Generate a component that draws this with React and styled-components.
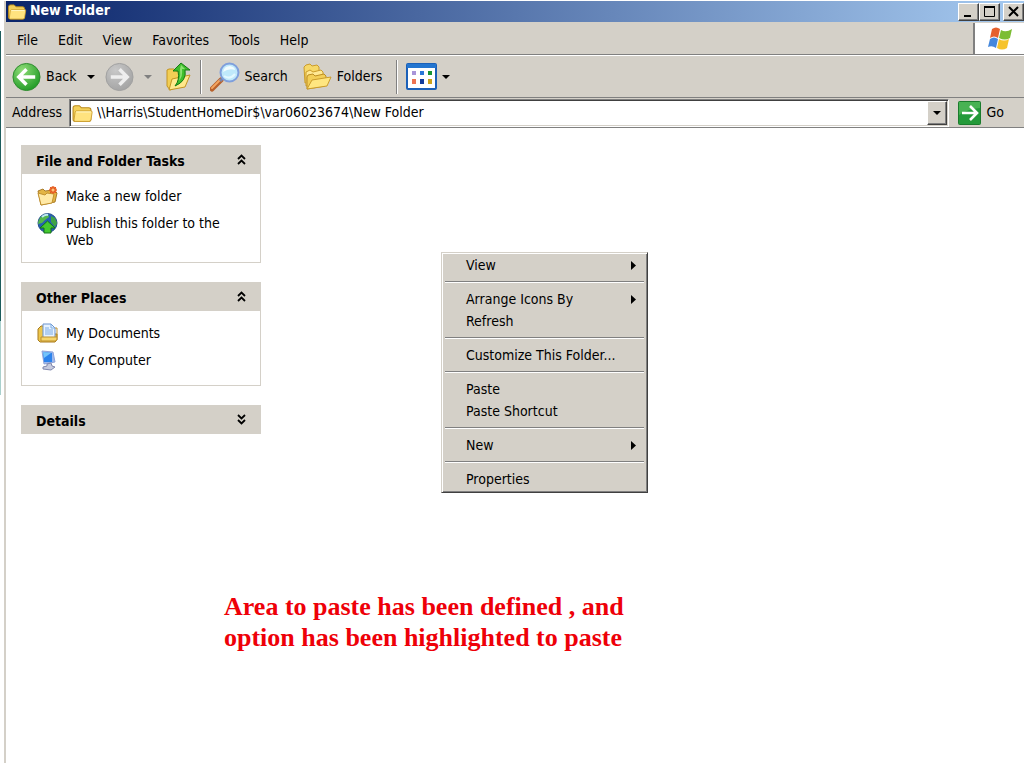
import React, { useState } from "react";
import styled, { createGlobalStyle } from "styled-components";

const GlobalStyle = createGlobalStyle`
  * {
    box-sizing: border-box;
  }

  body {
    margin: 0;
    background-color: #ffffff;
    color: #000000;
    font-family: "DejaVu Sans Condensed", "DejaVu Sans", sans-serif;
    font-size: 14px;
    line-height: 17px;
  }

  button,
  input {
    margin: 0;
    padding: 0;
    border: none;
    background: none;
    color: inherit;
    font: inherit;
  }

  svg {
    display: block;
    flex-shrink: 0;
  }
`;

const Screen = styled.div`
  display: flex;
  min-height: 100vh;
  padding: 1px 0 5px;
`;

// strip of the window behind
const Behind = styled.div`
  display: flex;
  flex-direction: column;
  width: 4px;
  padding-top: 30px;
`;

const BehindEdge = styled.div`
  width: 1px;
  height: ${(props) => (props.$faded ? "74px" : "290px")};
  background-color: ${(props) => (props.$faded ? "#a9d0cc" : "#1d5d5c")};
`;

const Window = styled.div`
  position: relative;
  display: flex;
  flex-direction: column;
  flex: 1;
  min-width: 0;
  border-left: 2px solid #d4d0c8;
`;

const TitleBar = styled.header`
  display: flex;
  align-items: center;
  height: 21px;
  padding-left: 1px;
  background: linear-gradient(to right, #0a246a, #a6caf0);
`;

const Title = styled.h1`
  flex: 1;
  margin: 0 0 0 3px;
  padding-bottom: 2px;
  color: #ffffff;
  font-size: 14px;
  font-weight: bold;
  line-height: 17px;
`;

const WindowButton = styled.button`
  display: flex;
  justify-content: center;
  align-items: center;
  width: 21px;
  height: 18px;
  margin-left: ${(props) => (props.$apart ? "3px" : "0")};
  background-color: #d4d0c8;
  border: 1px solid;
  border-color: #ffffff #404040 #404040 #ffffff;
  box-shadow: inset -1px -1px 0 #808080;
`;

const Bars = styled.div`
  background-color: #d4d0c8;
  border-top: 1px solid #d4d0c8;
  border-bottom: 1px solid #808080;
`;

const MenuBar = styled.nav`
  display: flex;
  align-items: stretch;
  height: 32px;
  padding-left: 1px;
  border-bottom: 1px solid #808080;
`;

const MenuButton = styled.button`
  padding: 3px 10px 0;
`;

const Brand = styled.div`
  display: flex;
  justify-content: center;
  align-items: center;
  width: 51px;
  margin-left: auto;
  background-color: #ffffff;
  border-left: 2px solid #808080;
`;

const Toolbar = styled.div`
  display: flex;
  align-items: center;
  height: 43px;
  padding: 0 6px;
  border-top: 1px solid #ffffff;
  border-bottom: 1px solid #808080;
`;

const ToolButton = styled.button`
  display: flex;
  align-items: center;
  gap: 5px;
  margin-right: ${(props) => props.$after || "12px"};
`;

const Separator = styled.div`
  width: 2px;
  height: 34px;
  margin-right: 8px;
  border-left: 1px solid #808080;
  border-right: 1px solid #ffffff;
`;

const AddressBar = styled.form`
  display: flex;
  align-items: center;
  height: 29px;
  padding: 0 20px 0 6px;
`;

const AddressField = styled.div`
  display: flex;
  align-items: center;
  flex: 1;
  height: 28px;
  margin: 0 9px 0 7px;
  padding-left: 2px;
  background-color: #ffffff;
  border: 1px solid;
  border-color: #808080 #ffffff #ffffff #808080;
  box-shadow: inset 1px 1px 0 #404040, inset -1px -1px 0 #d4d0c8;
`;

const AddressInput = styled.input`
  flex: 1;
  min-width: 0;
  padding-left: 4px;
  outline: none;
`;

const DropButton = styled(WindowButton)`
  width: 20px;
  height: 24px;
  margin-right: 1px;
`;

const GoButton = styled.button`
  display: flex;
  align-items: center;
  gap: 6px;
`;

const Content = styled.main`
  flex: 1;
  padding: 17px 15px;
  background-color: #ffffff;
`;

const Sidebar = styled.aside`
  display: flex;
  flex-direction: column;
  gap: 19px;
  width: 240px;
`;

const PanelHeader = styled.button`
  display: flex;
  justify-content: space-between;
  align-items: center;
  width: 100%;
  height: 29px;
  padding: 3px 14px 0 15px;
  background-color: #d4d0c8;
  font-weight: bold;
`;

const PanelBody = styled.div`
  display: flex;
  flex-direction: column;
  gap: 5px;
  padding: 12px 15px 13px;
  border: 1px solid #d4d0c8;
  border-top: none;
`;

const TaskLink = styled.a`
  display: flex;
  gap: 8px;
  min-height: 22px;
  color: #000000;
  text-decoration: none;

  span {
    padding-top: 2px;
    max-width: 160px;
  }
`;

const ContextMenu = styled.div`
  position: absolute;
  top: 251px;
  left: 435px;
  width: 207px;
  padding: 1px 3px 2px;
  background-color: #d4d0c8;
  border: 1px solid;
  border-color: #d4d0c8 #404040 #404040 #d4d0c8;
  box-shadow: inset 1px 1px 0 #ffffff, inset -1px -1px 0 #808080;
`;

const MenuItem = styled.button`
  display: flex;
  justify-content: space-between;
  align-items: center;
  width: 100%;
  height: 22px;
  padding: 1px 8px 0 21px;
`;

const MenuLine = styled.hr`
  height: 2px;
  margin: 5px 0;
  border: none;
  border-top: 1px solid #808080;
  border-bottom: 1px solid #ffffff;
`;

const Note = styled.p`
  position: absolute;
  top: 590px;
  left: 218px;
  width: 410px;
  margin: 0;
  color: #ee0008;
  font-family: "Liberation Serif", serif;
  font-size: 26px;
  font-weight: bold;
  line-height: 31px;
`;

const FolderIcon = ({ width, height }) => (
  <svg width={width} height={height} viewBox="0 0 20 18">
    <path
      d="M1 4Q1 2 3 2H7L9 4H16Q18 4 18 6V15Q18 17 16 17H3Q1 17 1 15Z"
      fill="#f3cf58"
      stroke="#b98a1d"
    />
    <path
      d="M4 7H18Q19.500 7 19.200 8.500L18 15.500Q17.700 17 16 17H3Q1.500 17 2 15L3 8Z"
      fill="#ffe37f"
      stroke="#c99b2c"
      strokeWidth="0.8"
    />
    <path d="M4 8H18" stroke="#fff6c8" />
  </svg>
);

const Caret = ({ color = "#000000" }) => (
  <svg width="8" height="4" viewBox="0 0 8 4">
    <path d="M0 0H8L4 4Z" fill={color} />
  </svg>
);

const SubArrow = () => (
  <svg width="5" height="9" viewBox="0 0 5 9">
    <path d="M0 0L5 4.500L0 9Z" fill="#000000" />
  </svg>
);

const RoundArrow = ({ id, light, dark, edge, back }) => (
  <svg width="29" height="30" viewBox="0 0 30 30">
    <defs>
      <radialGradient id={id} cx="0.35" cy="0.25" r="0.8">
        <stop offset="0" stopColor={light} />
        <stop offset="1" stopColor={dark} />
      </radialGradient>
    </defs>
    <circle cx="15" cy="15" r="14" fill={`url(#${id})`} stroke={edge} />
    <path
      d={back ? "M24 15H8M15 7L7 15L15 23" : "M6 15H22M15 7L23 15L15 23"}
      fill="none"
      stroke={back ? "#ffffff" : "#eeeeee"}
      strokeWidth="3.600"
    />
  </svg>
);

const UpFolderIcon = () => (
  <svg width="26" height="30" viewBox="0 0 26 30">
    <path d="M1 8L3 7L8 7L10 9L14 9V24L4 28L1 24Z" fill="#f2ce55" stroke="#c39422" />
    <path d="M3 28L6 17L24 13L19 25Z" fill="#ffe88c" stroke="#c39422" />
    <path
      d="M9 24Q14 18 12 9H7L15 1L24 8H19Q21 19 9 24Z"
      fill="#3fbd2c"
      stroke="#167a14"
    />
    <path d="M15 3L19 7H16Q17 14 13 19Q15 13 14 7Z" fill="#8be370" />
  </svg>
);

const SearchIcon = () => (
  <svg width="30" height="30" viewBox="0 0 30 30">
    <path d="M2 27L11 18" stroke="#b8612c" strokeWidth="5" strokeLinecap="round" />
    <path d="M2 26L10 18" stroke="#f3a560" strokeWidth="2" strokeLinecap="round" />
    <path d="M10 19L13 16" stroke="#7d86a8" strokeWidth="3" />
    <circle cx="19.500" cy="10.500" r="9" fill="#bfe9fb" stroke="#7f9fdc" strokeWidth="2" />
    <path d="M13 10Q14 4 20 4Q25 5 25 8Q19 6 13 10Z" fill="#f2fcff" />
    <path d="M14 14Q20 18 25 12" fill="none" stroke="#e3f8ff" strokeWidth="2" />
  </svg>
);

const FoldersIcon = () => (
  <svg width="30" height="28" viewBox="0 0 30 28">
    <path d="M2 4L4 2L8 1L10 3L15 2L17 4V16L3 20Z" fill="#f6d869" stroke="#cb9c2b" />
    <path d="M4 9L8 7L11 9L19 7L21 9L21 19L4 23Z" fill="#ffe993" stroke="#cb9c2b" />
    <path d="M5 14L6 12L11 11L13 13L22 11L24 13L23 23L5 26Z" fill="#f3cf58" stroke="#bd8e22" />
    <path d="M5 26L10 17L29 14L25 23Z" fill="#ffe680" stroke="#cb9c2b" />
  </svg>
);

const ViewsIcon = () => (
  <svg width="31" height="27" viewBox="0 0 31 27">
    <rect x="1" y="1" width="29" height="25" rx="1" fill="#ffffff" stroke="#1b60b8" strokeWidth="2" />
    <rect x="1" y="1" width="29" height="4" fill="#2375d0" />
    <rect x="6" y="8" width="4" height="4" fill="#a894d8" />
    <rect x="14" y="8" width="4" height="4" fill="#2a76d8" />
    <rect x="22" y="8" width="4" height="4" fill="#179432" />
    <rect x="6" y="16" width="4" height="5" fill="#ee7350" />
    <rect x="14" y="16" width="4" height="5" fill="#123c9c" />
    <rect x="22" y="16" width="4" height="5" fill="#cda21a" />
  </svg>
);

const FlagIcon = () => (
  <svg width="26" height="26" viewBox="0 0 26 26">
    <path d="M5 3Q9 0 13 3L11 12Q7 9 3 12Z" fill="#e4602c" />
    <path d="M14 4Q19 7 25 3L23 12Q18 15 12 12Z" fill="#7cbd33" />
    <path d="M3 13Q7 10 11 13L9 22Q5 19 1 21Z" fill="#4487dc" />
    <path d="M12 13Q17 16 22 13L20 22Q15 25 10 22Z" fill="#f6c32c" />
  </svg>
);

const GoIcon = () => (
  <svg width="23" height="24" viewBox="0 0 23 24">
    <rect x="0.500" y="0.500" width="22" height="23" rx="1" fill="#249a3a" stroke="#1b7c2d" />
    <path d="M1 1H22V7Q10 8 1 14Z" fill="#48b253" />
    <path d="M4 12H18M12 5L19 12L12 19" fill="none" stroke="#ffffff" strokeWidth="2.600" />
  </svg>
);

const NewFolderIcon = () => (
  <svg width="21" height="20" viewBox="0 0 21 20">
    <path d="M1 5L6 3L8 5L17 4L20 7L18 16L4 19Z" fill="#e3b545" stroke="#a87a28" />
    <path d="M4 19L1 7L8 9L10 7L17 8L15 17Z" fill="#ffe9a6" stroke="#c2912e" />
    <circle cx="16" cy="4" r="3.500" fill="#ee6a2c" />
    <path d="M16 0V8M12 4H20M13 1L19 7M19 1L13 7" stroke="#dd5a22" />
    <circle cx="16" cy="4" r="1.500" fill="#ffc37b" />
  </svg>
);

const GlobeIcon = () => (
  <svg width="21" height="21" viewBox="0 0 21 21">
    <circle cx="10.500" cy="10" r="9.500" fill="#2560b4" stroke="#28518c" />
    <path d="M3 5Q6 1 11 1L12 4L8 7L5 10L1 11Q1 8 3 5Z" fill="#54b84c" />
    <path d="M14 3L18 5L20 10L18 14L14 9Z" fill="#3fa445" />
    <path d="M5 4Q8 1 11 2" stroke="#bde7f5" strokeWidth="2" fill="none" />
    <path d="M10.500 8L18 15H14V20H7V15H3Z" fill="#44c92f" stroke="#15701b" />
  </svg>
);

const DocumentsIcon = () => (
  <svg width="21" height="20" viewBox="0 0 21 20">
    <path d="M1 6L4 3H7V11H20V17L18 19H3L1 17Z" fill="#edc64c" stroke="#a77b20" />
    <path d="M6 1H14L18 5V15H6Z" fill="#e6f2ff" stroke="#6a93cd" />
    <path d="M14 1V5H18M8 5H12M8 7H16M8 9H16M8 11H16" fill="none" stroke="#7dace4" />
    <path d="M4 14H20V16Q20 18 18 18H4Z" fill="#f6d66c" stroke="#bd9130" />
    <path d="M18 5H20V14" fill="none" stroke="#bd9130" />
  </svg>
);

const ComputerIcon = () => (
  <svg width="21" height="21" viewBox="0 0 21 21">
    <path d="M5 1L16 2L18 12L7 14Z" fill="#9db9ec" stroke="#8fa3da" />
    <path d="M6 2L15 3L15 12L7 12Z" fill="#2c83ec" />
    <path d="M6 2L14 3L7 8Z" fill="#74c4fa" />
    <path d="M10 14L14 13L15 16L18 17L14 20L6 19L6 17L10 16Z" fill="#c6cbdf" stroke="#8088ae" />
  </svg>
);

const Chevrons = ({ down }) => (
  <svg width="11" height="15" viewBox="0 0 11 15">
    <path
      d={down ? "M2 1L5.500 4.500L9 1M2 6L5.500 9.500L9 6" : "M2 5L5.500 1.500L9 5M2 10L5.500 6.500L9 10"}
      fill="none"
      stroke="#000000"
      strokeWidth="1.800"
    />
  </svg>
);

const menus = ["File", "Edit", "View", "Favorites", "Tools", "Help"];

const contextGroups = [
  [{ label: "View", sub: true }],
  [{ label: "Arrange Icons By", sub: true }, { label: "Refresh" }],
  [{ label: "Customize This Folder..." }],
  [{ label: "Paste" }, { label: "Paste Shortcut" }],
  [{ label: "New", sub: true }],
  [{ label: "Properties" }],
];

function Panel({ title, defaultOpen = true, children }) {
  const [open, setOpen] = useState(defaultOpen);

  return (
    <section>
      <PanelHeader aria-expanded={open} onClick={() => setOpen(!open)}>
        {title}
        <Chevrons down={!open} />
      </PanelHeader>
      {open && children && <PanelBody>{children}</PanelBody>}
    </section>
  );
}

function App() {
  const [address, setAddress] = useState(
    "\\\\Harris\\StudentHomeDir$\\var06023674\\New Folder"
  );

  return (
    <>
      <GlobalStyle />
      <Screen>
        <Behind>
          <BehindEdge />
          <BehindEdge $faded />
        </Behind>
        <Window>
          <TitleBar>
            <FolderIcon width={20} height={17} />
            <Title>New Folder</Title>
            <WindowButton aria-label="Minimize">
              <svg width="13" height="12" viewBox="0 0 13 12">
                <path d="M2 10H9" stroke="#000000" strokeWidth="2" />
              </svg>
            </WindowButton>
            <WindowButton aria-label="Maximize">
              <svg width="13" height="12" viewBox="0 0 13 12">
                <path d="M1 0H12V2H1Z" fill="#000000" />
                <path d="M1.500 1V10.500H11.500V1" fill="none" stroke="#000000" />
              </svg>
            </WindowButton>
            <WindowButton $apart aria-label="Close">
              <svg width="13" height="12" viewBox="0 0 13 12">
                <path d="M2 1L11 10M11 1L2 10" stroke="#000000" strokeWidth="2" />
              </svg>
            </WindowButton>
          </TitleBar>

          <Bars>
            <MenuBar>
              {menus.map((menu) => (
                <MenuButton key={menu}>{menu}</MenuButton>
              ))}
              <Brand>
                <FlagIcon />
              </Brand>
            </MenuBar>

            <Toolbar>
              <ToolButton $after="10px">
                <RoundArrow id="back" light="#8fdc78" dark="#1f9a24" edge="#2c8a2c" back />
                Back
              </ToolButton>
              <ToolButton $after="10px" aria-label="Back history">
                <Caret />
              </ToolButton>
              <ToolButton $after="10px" aria-label="Forward">
                <RoundArrow id="forward" light="#c8c8c8" dark="#a3a3a3" edge="#a0a0a0" />
              </ToolButton>
              <ToolButton $after="14px" aria-label="Forward history">
                <Caret color="#808080" />
              </ToolButton>
              <ToolButton $after="8px" aria-label="Up">
                <UpFolderIcon />
              </ToolButton>
              <Separator />
              <ToolButton $after="14px">
                <SearchIcon />
                Search
              </ToolButton>
              <ToolButton $after="14px">
                <FoldersIcon />
                Folders
              </ToolButton>
              <Separator />
              <ToolButton aria-label="Views">
                <ViewsIcon />
                <Caret />
              </ToolButton>
            </Toolbar>

            <AddressBar onSubmit={(e) => e.preventDefault()}>
              <label htmlFor="address">Address</label>
              <AddressField>
                <FolderIcon width={21} height={20} />
                <AddressInput
                  id="address"
                  value={address}
                  onChange={(e) => setAddress(e.target.value)}
                />
                <DropButton type="button" aria-label="Show addresses">
                  <Caret />
                </DropButton>
              </AddressField>
              <GoButton>
                <GoIcon />
                Go
              </GoButton>
            </AddressBar>
          </Bars>

          <Content>
            <Sidebar>
              <Panel title="File and Folder Tasks">
                <TaskLink href="#new-folder">
                  <NewFolderIcon />
                  <span>Make a new folder</span>
                </TaskLink>
                <TaskLink href="#publish">
                  <GlobeIcon />
                  <span>Publish this folder to the Web</span>
                </TaskLink>
              </Panel>
              <Panel title="Other Places">
                <TaskLink href="#documents">
                  <DocumentsIcon />
                  <span>My Documents</span>
                </TaskLink>
                <TaskLink href="#computer">
                  <ComputerIcon />
                  <span>My Computer</span>
                </TaskLink>
              </Panel>
              <Panel title="Details" defaultOpen={false} />
            </Sidebar>
          </Content>

          <ContextMenu role="menu">
            {contextGroups.map((group, i) => (
              <React.Fragment key={group[0].label}>
                {i > 0 && <MenuLine />}
                {group.map((item) => (
                  <MenuItem key={item.label} role="menuitem">
                    {item.label}
                    {item.sub && <SubArrow />}
                  </MenuItem>
                ))}
              </React.Fragment>
            ))}
          </ContextMenu>

          <Note>
            Area to paste has been defined , and option has been highlighted to
            paste
          </Note>
        </Window>
      </Screen>
    </>
  );
}

export default App;
